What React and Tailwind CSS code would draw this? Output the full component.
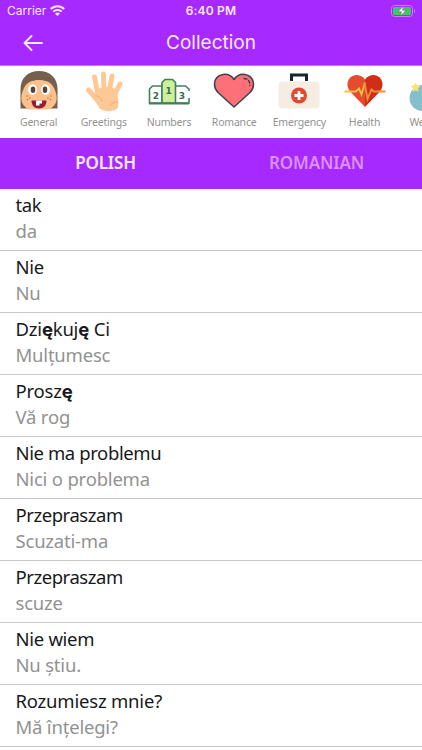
import React from 'react';

const GeneralIcon = () => (
  <svg width="40" height="40" viewBox="0 0 40 40">
    <path d="M1.500 38.500V19C1.500 8 9 1 20 1s18.500 7 18.500 18v19.500z" fill="#75604d" />
    <path d="M10 39.500C5 37 2.300 33 2.300 28c0-4 1.200-6 2.200-9 2-4 4-6.500 8.500-8 4-1.500 10-1.500 14 0 4.500 1.500 6.500 4 8.500 8 1 3 2.200 5 2.200 9 0 5-2.700 9-7.700 11.500z" fill="#fbc08b" />
    <ellipse cx="13.500" cy="19.500" rx="4.500" ry="5.200" fill="#fff" />
    <ellipse cx="26.500" cy="19.500" rx="4.500" ry="5.200" fill="#fff" />
    <ellipse cx="14" cy="19.700" rx="2.300" ry="3.300" fill="#51463e" />
    <ellipse cx="26" cy="19.700" rx="2.300" ry="3.300" fill="#51463e" />
    <g fill="#a8693f">
      <circle cx="8" cy="26" r=".7" />
      <circle cx="11" cy="28" r=".7" />
      <circle cx="8.500" cy="29.500" r=".7" />
      <circle cx="32" cy="26" r=".7" />
      <circle cx="29" cy="28" r=".7" />
      <circle cx="31.500" cy="29.500" r=".7" />
    </g>
    <path d="M12.500 30.500h15c0 5-3 8-7.500 8s-7.500-3-7.500-8z" fill="#941f35" />
    <path d="M17 30.500h6v3h-2.500v2H17z" fill="#fff" />
  </svg>
);

const GreetingsIcon = () => (
  <svg width="40" height="42" viewBox="0 0 40 42" fill="none" stroke="#fdc894" strokeLinecap="round">
    <path d="M14 25L10.500 7M20 23L19.500 4M25 23L28 6M30 26L36 14" strokeWidth="4.900" />
    <path d="M15 32L4.500 20" strokeWidth="5" />
    <path d="M12 21c7-4 14-3 20-1 .5 8 3 13 .5 18-4 3-12 3-16 0-3-4-5.500-10-4.500-17z" fill="#fdc894" strokeWidth="2" />
    <path d="M12 25.500c3.500 1 5.500 3 6 6M26 35c2-2 4-3 7-3" stroke="#f2a96f" strokeWidth="1" />
  </svg>
);

const NumbersIcon = () => (
  <svg width="42" height="28" viewBox="0 0 42 28" stroke="#41805a" strokeWidth="1.600">
    <path d="M14 8H4.500L1.500 11v14H14z" fill="#fff" />
    <path d="M27 8h10.500l3.500 3v2M41 20v5H27" fill="none" />
    <path d="M14 25V4.500L17 1.500h7.500l3 3V25z" fill="#cdef99" />
    <path d="M1 25.500h40" strokeWidth="2" />
    <g fill="#386d4b" stroke="none" fontFamily="DejaVu Sans" fontWeight="700" textAnchor="middle">
      <text x="8" y="21" fontSize="9">2</text>
      <text x="20.700" y="16" fontSize="9">1</text>
      <text x="34" y="21" fontSize="9">3</text>
    </g>
  </svg>
);

const RomanceIcon = () => (
  <svg width="42" height="36" viewBox="0 0 42 36">
    <path d="M21 34L5 19.500C-1 13 1 3 10 1.500c5-.8 9 2 11 5 2-3 6-5.800 11-5C41 3 43 13 37 19.500z" fill="#fe7079" stroke="#3d4248" strokeWidth="1.500" strokeLinejoin="round" />
    <path d="M31 5.500c4 0 6 3 6 7" fill="none" stroke="#3d4248" strokeWidth="1.400" strokeLinecap="round" strokeDasharray="3 2" />
  </svg>
);

const EmergencyIcon = () => (
  <svg width="42" height="36" viewBox="0 0 42 36">
    <path d="M13.500 8V2h15v6" fill="none" stroke="#17252c" strokeWidth="3" />
    <rect x=".5" y="8.500" width="41" height="27" rx="4" fill="#f5ede2" />
    <circle cx="21" cy="22.500" r="8" fill="#e14a31" />
    <path d="M21 18v9M16.500 22.500h9" stroke="#fff" strokeWidth="2.800" />
  </svg>
);

const HealthIcon = () => (
  <svg width="42" height="34" viewBox="0 0 42 34">
    <path d="M21 33L6.500 18C1 12 3 2 12 1c4 0 7 1.500 9 4.500z" fill="#e54b2d" />
    <path d="M21 33l14.500-15C41 12 39 2 30 1c-4 0-7 1.500-9 4.500z" fill="#cf2f14" />
    <path d="M.5 17.500H12l3-3 2.500 6 3.500-12" fill="none" stroke="#f7bd4b" strokeWidth="1.900" />
    <path d="M20.500 8.500L23.500 25l4-9.500 2 2h12" fill="none" stroke="#f28d40" strokeWidth="1.900" />
  </svg>
);

const WeatherIcon = () => (
  <svg width="42" height="36" viewBox="0 0 42 36">
    <circle cx="13.500" cy="15" r="13" fill="#85bfcb" />
    <path d="M6.500-.5l1.500 3 3.300.5-2.400 2.400.6 3.300-3-1.500-3 1.500.6-3.300L1.700 3 5 2.500z" fill="#ffe070" />
  </svg>
);

const categories = [
  { label: 'General', icon: <GeneralIcon />, pad: 'pt-0' },
  { label: 'Greetings', icon: <GreetingsIcon />, pad: 'pt-0' },
  { label: 'Numbers', icon: <NumbersIcon />, pad: 'pt-[8px]' },
  { label: 'Romance', icon: <RomanceIcon />, pad: 'pt-[3px]' },
  { label: 'Emergency', icon: <EmergencyIcon />, pad: 'pt-[3px]' },
  { label: 'Health', icon: <HealthIcon />, pad: 'pt-[4px]' },
  { label: 'Weather', icon: <WeatherIcon />, pad: 'pt-[13px]' },
];

const phrases = [
  { from: 'tak', to: 'da', spacing: 'tracking-[-0.400px]' },
  { from: 'Nie', to: 'Nu', spacing: 'tracking-[-0.300px]' },
  { from: 'Dziękuję Ci', to: 'Mulțumesc', spacing: 'tracking-[-0.200px]' },
  { from: 'Proszę', to: 'Vă rog', spacing: 'tracking-[-0.200px]' },
  { from: 'Nie ma problemu', to: 'Nici o problema', spacing: 'tracking-[-0.400px]' },
  { from: 'Przepraszam', to: 'Scuzati-ma', spacing: 'tracking-[-0.450px]' },
  { from: 'Przepraszam', to: 'scuze', spacing: 'tracking-[-0.450px]' },
  { from: 'Nie wiem', to: 'Nu știu.', spacing: 'tracking-[-0.300px]' },
  { from: 'Rozumiesz mnie?', to: 'Mă înțelegi?', spacing: 'tracking-[-0.200px]' },
];

const Phrase = ({ text }) =>
  text.split(/(ę)/).map((part, i) =>
    part === 'ę' ? (
      <span key={i} className="font-['Inter'] font-bold">{part}</span>
    ) : (
      part
    )
  );

const StatusBar = () => (
  <div className="grid h-[21px] grid-cols-3 items-center px-[7px] text-[12px] leading-none">
    <div className="flex items-center gap-[4px]">
      <span>Carrier</span>
      <svg width="15" height="11" viewBox="0 0 15 11" fill="none" stroke="currentColor" strokeWidth="2">
        <path d="M.8 4C4.500.2 10.500.2 14.200 4M3.300 6.600c2.400-2.300 6-2.300 8.400 0" />
        <path d="M7.500 11L5 8.500c1.500-1.300 3.500-1.300 5 0z" fill="currentColor" stroke="none" />
      </svg>
    </div>
    <span className="text-center font-semibold tracking-[0.2px]">6:40 PM</span>
    <svg className="ml-auto -mr-[1px]" width="25" height="12" viewBox="0 0 25 12">
      <rect x=".5" y=".5" width="21" height="11" rx="3" fill="none" stroke="#c77fff" />
      <rect x="2" y="2" width="18" height="8" rx="1.500" fill="#3ecb5d" />
      <path d="M23 4v4c1.500-.7 1.500-3.300 0-4z" fill="#c77fff" />
      <path d="M12.500 1L7 6.700h3.500L9.500 11 15 5.300h-3.500z" fill="#fff" stroke="#6b4a91" strokeWidth=".5" />
    </svg>
  </div>
);

const App = () => {
  return (
    <div className="flex h-[750px] w-[422px] flex-col overflow-hidden bg-white font-['Noto_Sans',sans-serif]">
      <header className="h-[66px] shrink-0 border-b border-[#c877ff] bg-[#a629ff] font-['Inter',sans-serif] text-[#fbeaff]">
        <StatusBar />
        <div className="grid h-[43px] grid-cols-[60px_1fr_60px] items-center">
          <svg className="ml-[23px]" width="20" height="16" viewBox="0 0 20 16" fill="none" stroke="currentColor" strokeWidth="1.900" strokeLinecap="round" strokeLinejoin="round">
            <path d="M8.500 1L1.500 8l7 7M1.500 8H19" />
          </svg>
          <h1 className="text-center text-[19px] leading-none">Collection</h1>
        </div>
      </header>

      <nav className="flex h-[72px] shrink-0 pl-[6px]">
        {categories.map((c) => (
          <div key={c.label} className="flex w-[65.200px] shrink-0 flex-col items-center pt-[4px]">
            <div className={`flex h-[45px] items-start ${c.pad}`}>{c.icon}</div>
            <span className="text-[10.500px] leading-[14px] tracking-[-0.200px] text-[#929292]">{c.label}</span>
          </div>
        ))}
      </nav>

      <div className="grid h-[50.600px] shrink-0 grid-cols-2 items-center bg-[#a629ff] text-center text-[17px] font-semibold leading-[24px] tracking-[-0.150px]">
        <span className="text-[#fdeaff]">POLISH</span>
        <span className="text-[#db91ff]">ROMANIAN</span>
      </div>

      <ul className="shrink-0">
        {phrases.map((p, i) => (
          <li key={i} className="h-[62.100px] border-b border-[#c8c8c8] pl-[15.500px] pt-[3px] text-[18.500px] leading-[26px]">
            <p className={`text-[#19191b] ${p.spacing}`}><Phrase text={p.from} /></p>
            <p className="tracking-[-0.200px] text-[#929292]">{p.to}</p>
          </li>
        ))}
      </ul>
    </div>
  );
};

export default App;
